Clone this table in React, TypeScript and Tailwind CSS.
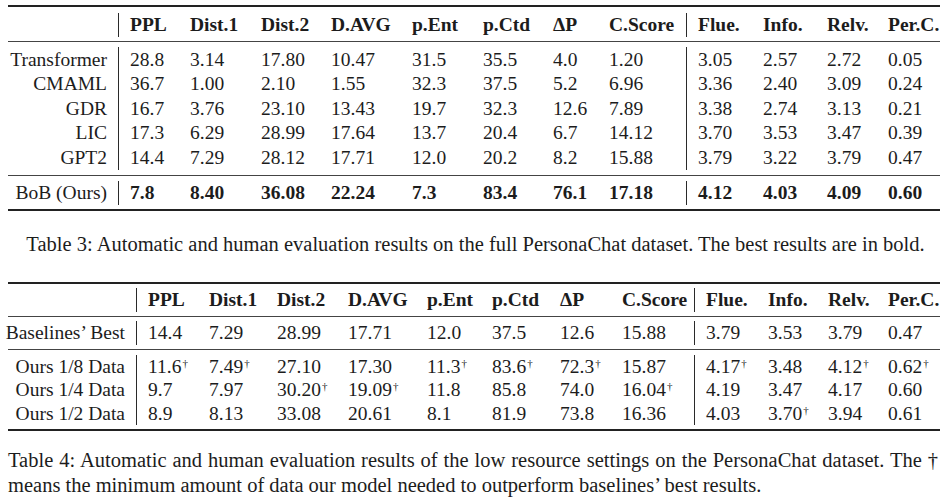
import React from "react";

type Cell = { v: string; dag?: boolean };

const T3_WIDTHS = [111, 71, 71, 70, 81, 71, 70, 56, 78, 76, 64, 61, 52];
const T4_WIDTHS = [129, 72, 68, 71, 79, 65, 68, 62, 73, 73, 60, 60, 52];

const HEADERS = ["PPL", "Dist.1", "Dist.2", "D.AVG", "p.Ent", "p.Ctd", "ΔP", "C.Score", "Flue.", "Info.", "Relv.", "Per.C."];

const t3Rows = [
  ["Transformer", "28.8", "3.14", "17.80", "10.47", "31.5", "35.5", "4.0", "1.20", "3.05", "2.57", "2.72", "0.05"],
  ["CMAML", "36.7", "1.00", "2.10", "1.55", "32.3", "37.5", "5.2", "6.96", "3.36", "2.40", "3.09", "0.24"],
  ["GDR", "16.7", "3.76", "23.10", "13.43", "19.7", "32.3", "12.6", "7.89", "3.38", "2.74", "3.13", "0.21"],
  ["LIC", "17.3", "6.29", "28.99", "17.64", "13.7", "20.4", "6.7", "14.12", "3.70", "3.53", "3.47", "0.39"],
  ["GPT2", "14.4", "7.29", "28.12", "17.71", "12.0", "20.2", "8.2", "15.88", "3.79", "3.22", "3.79", "0.47"],
];
const t3Best = ["BoB (Ours)", "7.8", "8.40", "36.08", "22.24", "7.3", "83.4", "76.1", "17.18", "4.12", "4.03", "4.09", "0.60"];

const t4Base = ["Baselines’ Best", "14.4", "7.29", "28.99", "17.71", "12.0", "37.5", "12.6", "15.88", "3.79", "3.53", "3.79", "0.47"];

// a trailing "*" marks a dagger
const t4Rows = [
  ["Ours 1/8 Data", "11.6*", "7.49*", "27.10", "17.30", "11.3*", "83.6*", "72.3*", "15.87", "4.17*", "3.48", "4.12*", "0.62*"],
  ["Ours 1/4 Data", "9.7", "7.97", "30.20*", "19.09*", "11.8", "85.8", "74.0", "16.04*", "4.19", "3.47", "4.17", "0.60"],
  ["Ours 1/2 Data", "8.9", "8.13", "33.08", "20.61", "8.1", "81.9", "73.8", "16.36", "4.03", "3.70*", "3.94", "0.61"],
];

function parse(s: string): Cell {
  return s.endsWith("*") ? { v: s.slice(0, -1), dag: true } : { v: s };
}

function Row({
  cells,
  widths,
  bold,
  labelBold,
  h,
}: {
  cells: string[];
  widths: number[];
  bold?: boolean;
  labelBold?: boolean;
  h: string;
}) {
  return (
    <div className={`flex items-center ${h}`}>
      {cells.map((raw, i) => {
        const c = parse(raw);
        const first = i === 0;
        const afterSep = i === 1 || i === 9;
        return (
          <div
            key={i}
            style={{ width: widths[i] }}
            className={`shrink-0 h-full flex items-center whitespace-nowrap ${
              first ? "justify-end pr-[11px]" : ""
            } ${afterSep ? "pl-[11px]" : ""} ${first || i === 8 ? "border-r border-[#2a2a2a]" : ""} ${
              (first ? labelBold : bold) ? "font-bold" : ""
            }`}
          >
            <span>
              {c.v}
              {c.dag && <sup className="text-[11px] -top-[6px] ml-[1px]">†</sup>}
            </span>
          </div>
        );
      })}
    </div>
  );
}

export default function App() {
  return (
    <div
      className="w-[951px] h-[501px] bg-white text-[#1c1c1c] text-[19.5px] leading-none overflow-hidden"
      style={{ fontFamily: '"Liberation Serif", "Times New Roman", serif' }}
    >
      {/* Table 3 */}
      <div className="ml-[8px] w-[932px] pt-[5px]">
        <div className="h-[2px] bg-[#222]" />
        <div className="pt-[6px] pb-[4px]">
          <Row cells={["", ...HEADERS]} widths={T3_WIDTHS} bold h="h-[24px]" />
        </div>
        <div className="h-[1px] bg-[#444]" />
        <div className="py-[5px]">
          {t3Rows.map((r) => (
            <Row key={r[0]} cells={r} widths={T3_WIDTHS} h="h-[24.5px]" />
          ))}
        </div>
        <div className="h-[1px] bg-[#444]" />
        <div className="pt-[5px] pb-[4px]">
          <Row cells={t3Best} widths={T3_WIDTHS} bold h="h-[24.5px]" />
        </div>
        <div className="h-[2px] bg-[#222]" />
      </div>

      <p className="text-center text-[20.5px] mt-[23px] h-[20px] leading-[20px]">
        Table 3: Automatic and human evaluation results on the full PersonaChat dataset. The best results are in bold.
      </p>

      {/* Table 4 */}
      <div className="ml-[8px] w-[932px] mt-[28px]">
        <div className="h-[2px] bg-[#222]" />
        <div className="pt-[4px] pb-[4px]">
          <Row cells={["", ...HEADERS]} widths={T4_WIDTHS} bold h="h-[24px]" />
        </div>
        <div className="h-[1px] bg-[#444]" />
        <div className="pt-[4px] pb-[4px]">
          <Row cells={t4Base} widths={T4_WIDTHS} h="h-[23.5px]" />
        </div>
        <div className="h-[1px] bg-[#444]" />
        <div className="pt-[5px] pb-[4px]">
          {t4Rows.map((r) => (
            <Row key={r[0]} cells={r} widths={T4_WIDTHS} h="h-[23.5px]" />
          ))}
        </div>
        <div className="h-[2px] bg-[#222]" />
      </div>

      <p className="ml-[8px] w-[930px] mt-[17px] text-[20.5px] leading-[25px] text-justify">
        Table 4: Automatic and human evaluation results of the low resource settings on the PersonaChat dataset. The †
        means the minimum amount of data our model needed to outperform baselines’ best results.
      </p>
    </div>
  );
}
